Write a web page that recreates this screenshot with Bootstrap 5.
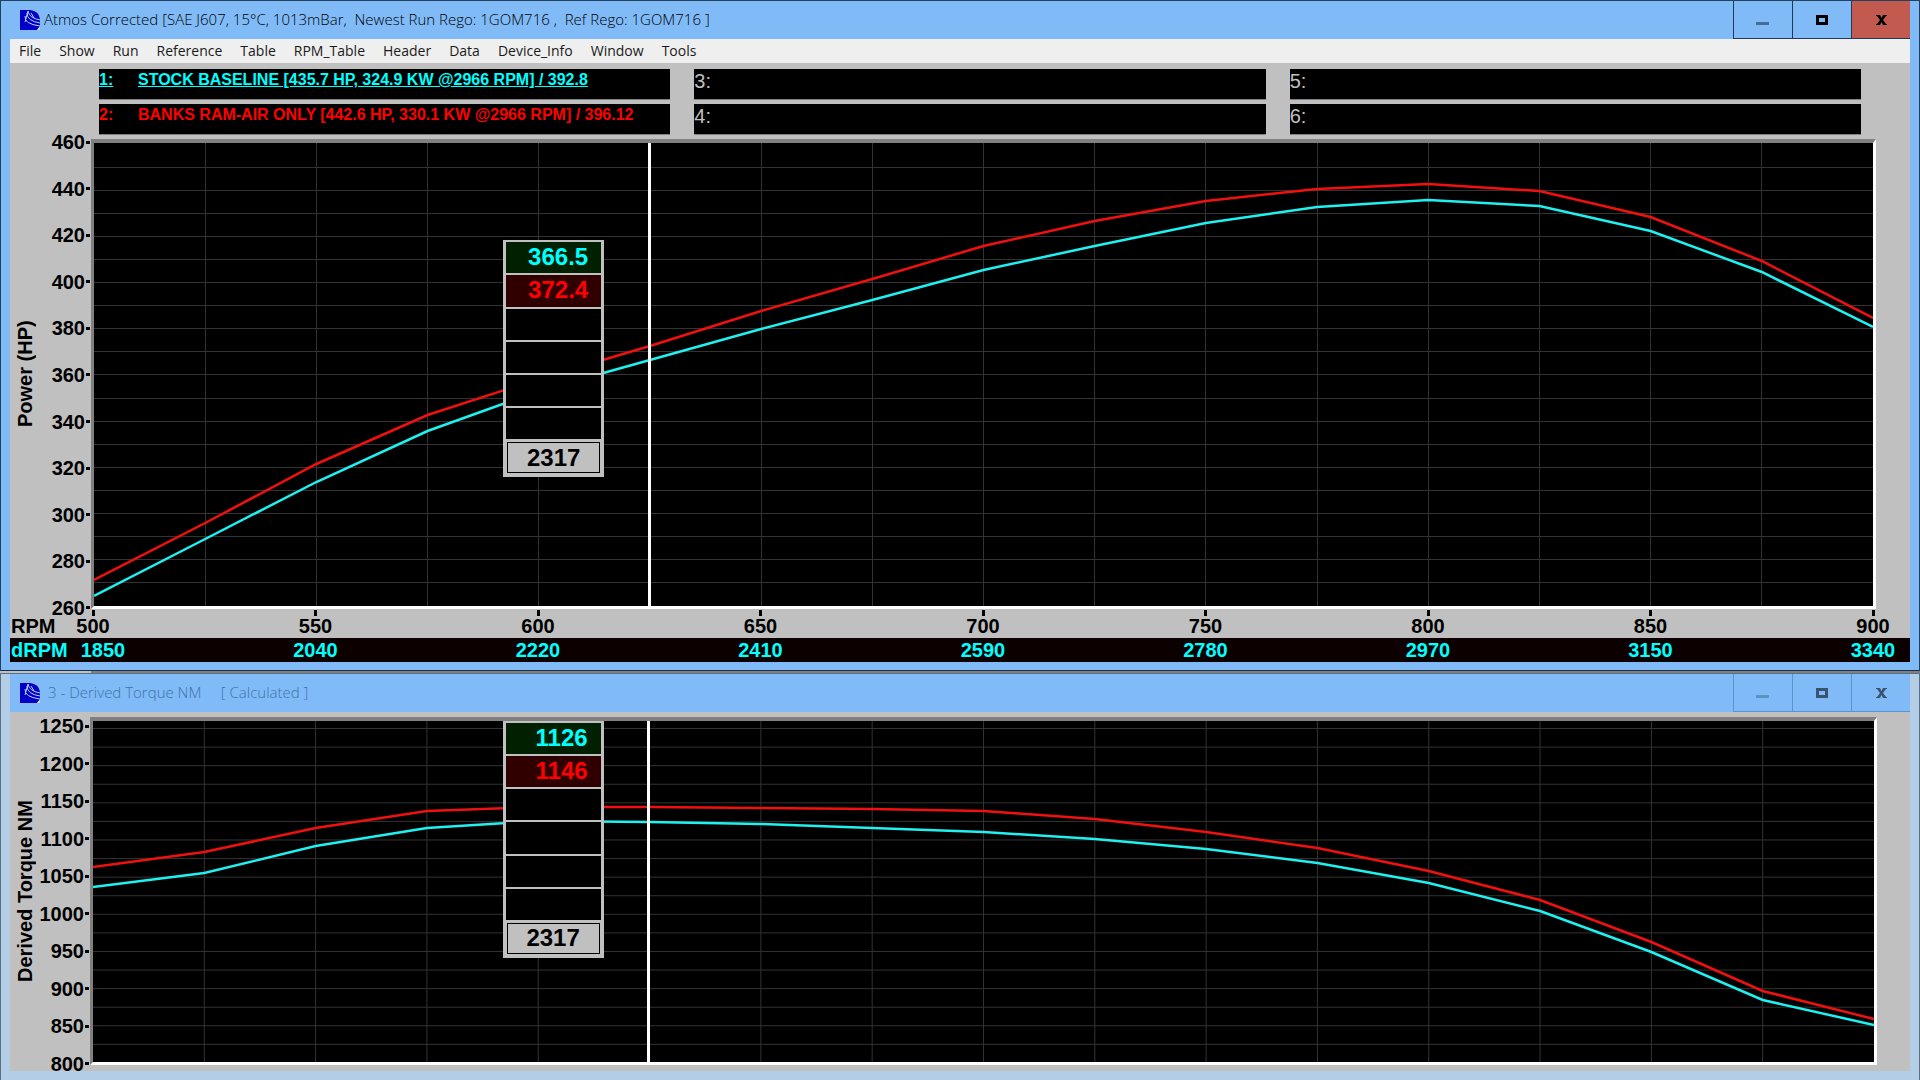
<!DOCTYPE html>
<html lang="en">
<head>
<meta charset="utf-8">
<meta name="viewport" content="width=device-width, initial-scale=1">
<title>Atmos Corrected - Power and Derived Torque</title>
<link href="https://cdn.jsdelivr.net/npm/bootstrap@5.3.0/dist/css/bootstrap.min.css" rel="stylesheet">
<style>
:root{--sky:#80bbf8;--panel:#c0c0c0;--shade:#808080;--cy:#00ffff;--rd:#ff0000}
body{background:var(--panel);font-family:"Liberation Sans",Arial,sans-serif;color:#000}
.win{border:1px solid #24405f;border-bottom:0}
/* Basis is the chrome round each plot; the rest is shared in the ratio of the plots. */
.main-frame{flex:463 0 208px;padding:0 9px 8px;background:var(--sky);border-bottom:1px solid #16304d}
.sub-frame{flex:341 0 66px;padding:0 9px 9px;background:#b4cde6;border-color:#5b6f86}
.sliver{height:2px;margin-left:91px;background:var(--shade)}
.title-bar{height:38px;background:var(--sky);font-family:"Open Sans",sans-serif;font-size:15px;font-weight:300}
.title-text{white-space:pre;color:#000;line-height:20px;padding-bottom:2px}
.app-icon{width:20px;height:20px;margin-left:10px}
.win-btn{width:59px;border:0;border-left:1px solid #1f3a58;border-bottom:1px solid #1f3a58;background:transparent;padding:0 0 2px}
.win-btn.close-btn{background:#c35a50}
.sub-frame .title-text{color:#3f72a6}
.sub-frame .win-btn{border-color:#5b93cb}
.sub-frame .win-btn svg{opacity:.55}
.menu-bar{height:24px;background:#efefef;font-family:"Open Sans",sans-serif;font-size:14px;padding-left:9px;gap:18px}
.menu-bar a{color:#1a1a1a;text-decoration:none;line-height:24px}
.client{background:var(--panel)}
.runs{display:grid;grid-template-columns:repeat(3,1fr);grid-template-rows:31px 31px;grid-auto-flow:column;gap:4px 24px;padding:6px 49px 4px 89px}
.run-box{background:#000;border-bottom:1px solid var(--shade);color:var(--panel);font-size:20px;line-height:24px;white-space:pre;overflow:hidden}
.run-set{font-size:16px;font-weight:700;line-height:22px}
.run-set span{display:inline-block;width:39px;text-decoration:inherit}
.run-1{color:var(--cy);text-decoration:underline}
.run-2{color:var(--rd)}
.y-name{width:30px;font-size:20px;font-weight:700;writing-mode:vertical-rl;transform:rotate(180deg);white-space:nowrap;line-height:30px;text-align:center}
.y-scale{font-size:20px;font-weight:700}
.y-scale div{height:0;display:flex;align-items:center;justify-content:flex-end}
.y-scale div::after{content:"";flex:none;width:4px;height:3px;background:#000;margin-left:1px}
.y-main{width:51px;padding:3px 1px 1px 0}
.y-sub{width:50px;padding:9px 1px 1px 0}
.plot{position:relative;background:#000;border:solid;border-width:4px 3px 3px;border-color:var(--shade) #fff #fff var(--shade)}
.plot>svg{display:block;position:absolute;inset:0;width:100%;height:100%}
.plot path,.plot polyline{fill:none;vector-effect:non-scaling-stroke}
.plot-gap{width:34px}
.plot-gap-sub{width:33px}
.grid-v,.grid-h{stroke:#333;stroke-width:1;shape-rendering:crispEdges}
.curve-1{stroke:#1ff0f0;stroke-width:2.5}
.curve-2{stroke:#f01010;stroke-width:2.5}
.cursor-line{stroke:#fff;stroke-width:3;shape-rendering:crispEdges}
.readout{position:absolute;left:23%;width:101px;height:237px;background:var(--panel);padding:2px 3px 3px;gap:2px;font-size:24px;font-weight:700}
.readout div{flex:1 1 0;background:#000;display:flex;align-items:center;justify-content:flex-end;padding:0 13px 2px 0;line-height:1}
.readout .ro-1{background:#002000;color:var(--cy)}
.readout .ro-2{background:#300000;color:var(--rd)}
.readout .ro-x{background:var(--panel);border:1px solid #000;margin:1px;justify-content:center;padding:0}
.ro-mid{top:21%}
.ro-top{top:0}
.x-row{font-size:20px;font-weight:700;padding-right:37px}
.x-name{width:83px;padding-left:1px}
.x-row .x-tick{width:0;display:flex;flex-direction:column;align-items:center;white-space:nowrap}
.rpm{height:29px;line-height:20px}
.rpm .x-name{padding-top:7px}
.rpm .x-tick::before{content:"";width:3px;height:6px;margin-top:1px;background:#000;flex:none}
.drpm{height:24px;line-height:24px;background:#0c0000;color:var(--cy)}
.drpm .x-tick:first-child span{padding-left:20px}
.sub-client{padding-top:5px;padding-bottom:6px}
</style>
</head>
<body class="min-vh-100 d-flex flex-column">

<!-- Main window: power -->
<section class="win main-frame d-flex flex-column">
  <header class="title-bar d-flex align-items-center">
    <svg class="app-icon" viewBox="0 0 20 20"><path d="M0 0H10Q19 1 20 9V17L17 20H0Z" fill="#0000c8"/><path d="M17 20L20 16V20Z" fill="#d8d8b0"/><path d="M8 1Q9 8 20 10M7 3Q7 11 20 13M5 6Q4 14 20 16M8 1L5 12M11 3L14 8" fill="none" stroke="#b9d4ff" stroke-width="1"/></svg>
    <span class="title-text ms-1">Atmos Corrected [SAE J607, 15°C, 1013mBar,  Newest Run Rego: 1GOM716 ,  Ref Rego: 1GOM716 ]</span>
    <div class="ms-auto d-flex align-self-stretch">
      <button class="win-btn" type="button" aria-label="Minimize"><svg width="14" height="14" viewBox="0 0 14 14"><path d="M0 9H13V12H0Z" fill="#3f6f9e"/></svg></button>
      <button class="win-btn" type="button" aria-label="Maximize"><svg width="12" height="10" viewBox="0 0 12 10"><path d="M1.500 1.500H10.500V8.500H1.500Z" fill="none" stroke="#000" stroke-width="3"/></svg></button>
      <button class="win-btn close-btn" type="button" aria-label="Close"><svg width="11" height="10" viewBox="0 0 11 10"><path d="M0 0H4L5.500 3L7 0H11V1H10L7 5L10 9H11V10H7L5.500 7L4 10H0V9H1L4 5L1 1H0Z" fill="#000"/></svg></button>
    </div>
  </header>
  <nav class="menu-bar d-flex">
    <a href="#">File</a><a href="#">Show</a><a href="#">Run</a><a href="#">Reference</a><a href="#">Table</a><a href="#">RPM_Table</a><a href="#">Header</a><a href="#">Data</a><a href="#">Device_Info</a><a href="#">Window</a><a href="#">Tools</a>
  </nav>
  <main class="client flex-grow-1 d-flex flex-column">
    <div class="runs">
      <div class="run-box run-set run-1"><span>1:</span>STOCK BASELINE [435.7 HP, 324.9 KW @2966 RPM] / 392.8</div>
      <div class="run-box run-set run-2"><span>2:</span>BANKS RAM-AIR ONLY [442.6 HP, 330.1 KW @2966 RPM] / 396.12</div>
      <div class="run-box">3:</div><div class="run-box">4:</div>
      <div class="run-box">5:</div><div class="run-box">6:</div>
    </div>
    <div class="flex-grow-1 d-flex">
      <div class="y-name">Power (HP)</div>
      <div class="y-scale y-main d-flex flex-column justify-content-between">
        <div>460</div><div>440</div><div>420</div><div>400</div><div>380</div><div>360</div><div>340</div><div>320</div><div>300</div><div>280</div><div>260</div>
      </div>
      <div class="plot flex-grow-1">
        <svg viewBox="0 0 1600 463" preserveAspectRatio="none">
          <path class="grid-v" d=""/><path class="grid-h" data-first="24" data-step="23.1" data-count="19" d=""/>
          <polyline class="curve-2" points="0,437 100,380 200,321 300,272 400,236 500,203 600,168 700,136 800,103 900,78 1000,58 1100,46 1200,41 1300,48 1400,74 1500,118 1600,175"/>
          <polyline class="curve-1" points="0,453 100,396 200,339 300,288 400,248 500,217 600,186 700,157 800,127 900,103 1000,80 1100,64 1200,57 1300,63 1400,88 1500,129 1600,184"/>
          <path class="cursor-line" d="M500 0V463"/>
        </svg>
        <div class="readout ro-mid d-flex flex-column"><div class="ro-1">366.5</div><div class="ro-2">372.4</div><div></div><div></div><div></div><div></div><div class="ro-x">2317</div></div>
      </div>
      <div class="plot-gap"></div>
    </div>
    <div class="x-row rpm d-flex">
      <div class="x-name">RPM</div>
      <div class="flex-grow-1 d-flex justify-content-between"><div class="x-tick"><span>500</span></div><div class="x-tick"><span>550</span></div><div class="x-tick"><span>600</span></div><div class="x-tick"><span>650</span></div><div class="x-tick"><span>700</span></div><div class="x-tick"><span>750</span></div><div class="x-tick"><span>800</span></div><div class="x-tick"><span>850</span></div><div class="x-tick"><span>900</span></div></div>
    </div>
    <div class="x-row drpm d-flex">
      <div class="x-name">dRPM</div>
      <div class="flex-grow-1 d-flex justify-content-between"><div class="x-tick"><span>1850</span></div><div class="x-tick"><span>2040</span></div><div class="x-tick"><span>2220</span></div><div class="x-tick"><span>2410</span></div><div class="x-tick"><span>2590</span></div><div class="x-tick"><span>2780</span></div><div class="x-tick"><span>2970</span></div><div class="x-tick"><span>3150</span></div><div class="x-tick"><span>3340</span></div></div>
    </div>
  </main>
</section>

<div class="sliver flex-shrink-0"></div>

<!-- Second window: torque -->
<section class="win sub-frame d-flex flex-column">
  <header class="title-bar d-flex align-items-center">
    <svg class="app-icon" viewBox="0 0 20 20"><path d="M0 0H10Q19 1 20 9V17L17 20H0Z" fill="#0000c8"/><path d="M17 20L20 16V20Z" fill="#d8d8b0"/><path d="M8 1Q9 8 20 10M7 3Q7 11 20 13M5 6Q4 14 20 16M8 1L5 12M11 3L14 8" fill="none" stroke="#b9d4ff" stroke-width="1"/></svg>
    <span class="title-text ms-2">3 - Derived Torque NM     [ Calculated ]</span>
    <div class="ms-auto d-flex align-self-stretch">
      <button class="win-btn" type="button" aria-label="Minimize"><svg width="14" height="14" viewBox="0 0 14 14"><path d="M0 9H13V12H0Z" fill="#3f6f9e"/></svg></button>
      <button class="win-btn" type="button" aria-label="Maximize"><svg width="12" height="10" viewBox="0 0 12 10"><path d="M1.500 1.500H10.500V8.500H1.500Z" fill="none" stroke="#000" stroke-width="3"/></svg></button>
      <button class="win-btn" type="button" aria-label="Close"><svg width="11" height="10" viewBox="0 0 11 10"><path d="M0 0H4L5.500 3L7 0H11V1H10L7 5L10 9H11V10H7L5.500 7L4 10H0V9H1L4 5L1 1H0Z" fill="#000"/></svg></button>
    </div>
  </header>
  <div class="client sub-client flex-grow-1 d-flex">
    <div class="y-name">Derived Torque NM</div>
    <div class="y-scale y-sub d-flex flex-column justify-content-between">
      <div>1250</div><div>1200</div><div>1150</div><div>1100</div><div>1050</div><div>1000</div><div>950</div><div>900</div><div>850</div><div>800</div>
    </div>
    <div class="plot flex-grow-1">
      <svg viewBox="0 0 1600 341" preserveAspectRatio="none">
        <path class="grid-v" d=""/><path class="grid-h" data-first="7.5" data-step="18.58" data-count="18" d=""/>
        <polyline class="curve-2" points="0,146 100,131 200,107 300,90 400,86 500,86 600,87 700,88 800,90 900,98 1000,111 1100,127 1200,150 1300,179 1400,221 1500,270 1600,298"/>
        <polyline class="curve-1" points="0,166 100,152 200,125 300,107 400,100 500,101 600,103 700,107 800,111 900,118 1000,128 1100,142 1200,162 1300,190 1400,231 1500,279 1600,304"/>
        <path class="cursor-line" d="M499 0V341"/>
      </svg>
      <div class="readout ro-top d-flex flex-column"><div class="ro-1">1126</div><div class="ro-2">1146</div><div></div><div></div><div></div><div></div><div class="ro-x">2317</div></div>
    </div>
    <div class="plot-gap-sub"></div>
  </div>
</section>

<script src="https://cdn.jsdelivr.net/npm/bootstrap@5.3.0/dist/js/bootstrap.bundle.min.js"></script>
<script>
// Grid lines: 15 inner verticals, horizontals from each plot's own scale.
document.querySelectorAll('.grid-v').forEach(function (p) {
  var d = '';
  for (var i = 1; i < 16; i++) d += 'M' + i * 100 + ' 0V500';
  p.setAttribute('d', d);
});
document.querySelectorAll('.grid-h').forEach(function (p) {
  var d = '', s = p.dataset;
  for (var i = 0; i < +s.count; i++) d += 'M0 ' + (+s.first + i * s.step) + 'H1600';
  p.setAttribute('d', d);
});
</script>
</body>
</html>
